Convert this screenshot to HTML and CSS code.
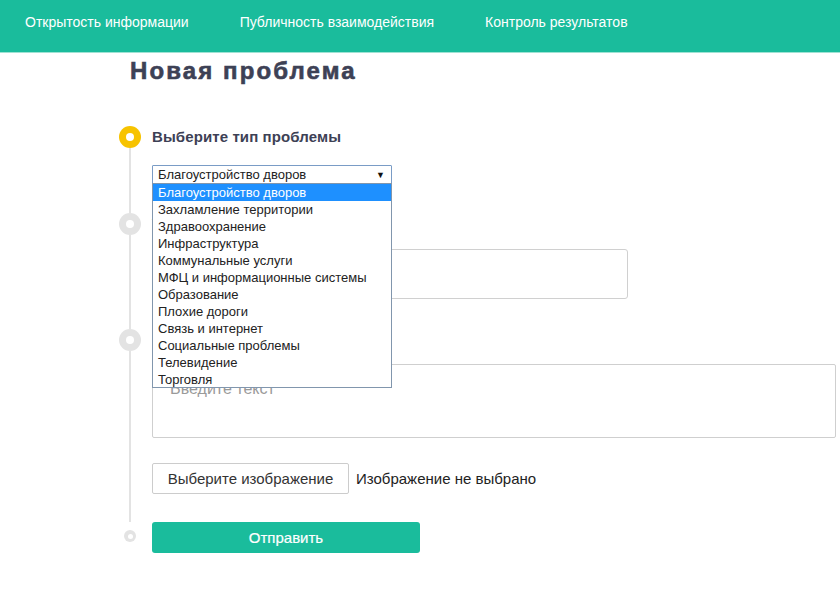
FILE: index.html
```html
<!DOCTYPE html>
<html lang="ru">
<head>
<meta charset="utf-8">
<title>Новая проблема</title>
<link rel="stylesheet" href="styles.css">
</head>
<body>
<header class="topbar">
  <nav class="nav">
    <a class="nav-link" href="#">Открытость информации</a>
    <a class="nav-link" href="#">Публичность взаимодействия</a>
    <a class="nav-link" href="#">Контроль результатов</a>
  </nav>
</header>
<main class="page">
  <h1 class="title">Новая проблема</h1>
  <div class="steps">
    <section class="step step-first">
      <div class="rail"><span class="dot dot-active"></span><span class="line"></span></div>
      <div class="content">
        <div class="label">Выберите тип проблемы</div>
        <div class="select-wrap">
          <div class="select"><span>Благоустройство дворов</span><span class="arrow">▼</span></div>
          <ul class="options">
            <li class="opt selected">Благоустройство дворов</li>
            <li class="opt">Захламление территории</li>
            <li class="opt">Здравоохранение</li>
            <li class="opt">Инфраструктура</li>
            <li class="opt">Коммунальные услуги</li>
            <li class="opt">МФЦ и информационные системы</li>
            <li class="opt">Образование</li>
            <li class="opt">Плохие дороги</li>
            <li class="opt">Связь и интернет</li>
            <li class="opt">Социальные проблемы</li>
            <li class="opt">Телевидение</li>
            <li class="opt">Торговля</li>
          </ul>
        </div>
      </div>
    </section>
    <section class="step step-second">
      <div class="rail"><span class="dot"></span><span class="line"></span></div>
      <div class="content">
        <div class="label">Укажите адрес</div>
        <div class="input"></div>
      </div>
    </section>
    <section class="step step-third">
      <div class="rail"><span class="dot"></span><span class="line"></span></div>
      <div class="content">
        <div class="label">Опишите проблему</div>
        <div class="textarea"><span class="placeholder">Введите текст</span></div>
        <div class="file-row">
          <button class="file-btn" type="button">Выберите изображение</button>
          <span class="file-name">Изображение не выбрано</span>
        </div>
      </div>
    </section>
    <section class="step step-last">
      <div class="rail"><span class="dot dot-small"></span></div>
      <div class="content">
        <button class="submit" type="button">Отправить</button>
      </div>
    </section>
  </div>
</main>
</body>
</html>
```

FILE: styles.css
```css
* { box-sizing: border-box; }
body {
  margin: 0;
  font-family: "Liberation Sans", Arial, sans-serif;
  color: #222;
  background: #fff;
}
.topbar {
  height: 53px;
  background: #1abc9c;
  border-bottom: 1px solid #9fe2d3;
  padding: 14px 0 0 25px;
}
.nav {
  display: flex;
  gap: 51px;
}
.nav-link {
  color: #fff;
  text-decoration: none;
  font-size: 14px;
  line-height: 16px;
}
.page {
  padding-left: 108px;
}
.title {
  margin: 4px 0 0 22px;
  font-size: 24px;
  line-height: 28px;
  font-weight: 700;
  letter-spacing: 2.1px;
  color: #3d4155;
  -webkit-text-stroke: 0.6px #3d4155;
}
.steps {
  margin-top: 41px;
}
.step {
  display: grid;
  grid-template-columns: 44px 1fr;
}
.rail {
  display: flex;
  flex-direction: column;
  align-items: center;
}
.dot {
  width: 22px;
  height: 22px;
  border-radius: 50%;
  background: #e3e3e3;
  display: flex;
  align-items: center;
  justify-content: center;
  flex: none;
}
.dot::after {
  content: "";
  width: 8px;
  height: 8px;
  border-radius: 50%;
  background: #fff;
}
.dot-active { background: #f7c300; }
.dot-small {
  width: 12px;
  height: 12px;
  margin-top: 8px;
}
.dot-small::after { width: 5px; height: 5px; }
.line {
  flex: 1;
  width: 2px;
  background: #e3e3e3;
}
.content { min-width: 0; }
.label {
  font-size: 15px;
  line-height: 22px;
  font-weight: 700;
  letter-spacing: 0.1px;
  color: #3d4155;
}
.step-first .content { padding-bottom: 29px; }
.select-wrap {
  position: relative;
  width: 240px;
  margin-top: 17px;
}
.select {
  height: 19px;
  border: 1px solid #7a9cc6;
  border-radius: 1px;
  display: flex;
  align-items: center;
  justify-content: space-between;
  padding: 0 6px 0 5px;
  font-size: 13px;
  color: #222;
}
.arrow { font-size: 9px; color: #111; }
.options {
  position: absolute;
  left: 0;
  top: 18px;
  width: 240px;
  margin: 0;
  padding: 0;
  list-style: none;
  background: #fff;
  border: 1px solid #8196ad;
  z-index: 5;
}
.opt {
  height: 17px;
  line-height: 17px;
  padding-left: 5px;
  font-size: 13px;
  color: #222;
  white-space: nowrap;
}
.opt:last-child { height: 16px; }
.opt.selected { background: #1e90ff; color: #fff; }
.step-second .content { padding-bottom: 30px; }
.input {
  width: 476px;
  height: 50px;
  margin-top: 14px;
  border: 1px solid #d0d0d0;
  border-radius: 3px;
}
.textarea {
  width: 684px;
  height: 74px;
  margin-top: 13px;
  border: 1px solid #cfcfcf;
  border-radius: 2px;
  padding: 15px 17px;
}
.placeholder {
  font-size: 16px;
  color: #9a9a9a;
}
.file-row {
  display: flex;
  align-items: center;
  gap: 7px;
  margin-top: 25px;
  padding-bottom: 28px;
}
.file-btn {
  width: 197px;
  height: 31px;
  background: #fff;
  border: 1px solid #cccccc;
  border-radius: 2px;
  font-family: inherit;
  font-size: 15px;
  color: #333;
  padding: 0;
}
.file-name {
  font-size: 15px;
  color: #222;
}
.submit {
  width: 268px;
  height: 31px;
  background: #1abc9c;
  border: none;
  border-radius: 3px;
  color: #fff;
  font-family: inherit;
  font-size: 15px;
  padding: 0;
  -webkit-text-stroke: 0.2px #fff;
}
```
